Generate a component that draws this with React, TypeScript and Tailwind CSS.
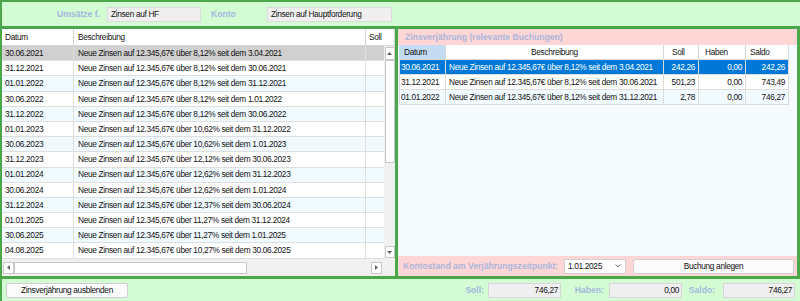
import React from 'react';

const leftRows = [
  ['30.06.2021', 'Neue Zinsen auf 12.345,67€ über 8,12% seit dem 3.04.2021'],
  ['31.12.2021', 'Neue Zinsen auf 12.345,67€ über 8,12% seit dem 30.06.2021'],
  ['01.01.2022', 'Neue Zinsen auf 12.345,67€ über 8,12% seit dem 31.12.2021'],
  ['30.06.2022', 'Neue Zinsen auf 12.345,67€ über 8,12% seit dem 1.01.2022'],
  ['31.12.2022', 'Neue Zinsen auf 12.345,67€ über 8,12% seit dem 30.06.2022'],
  ['01.01.2023', 'Neue Zinsen auf 12.345,67€ über 10,62% seit dem 31.12.2022'],
  ['30.06.2023', 'Neue Zinsen auf 12.345,67€ über 10,62% seit dem 1.01.2023'],
  ['31.12.2023', 'Neue Zinsen auf 12.345,67€ über 12,12% seit dem 30.06.2023'],
  ['01.01.2024', 'Neue Zinsen auf 12.345,67€ über 12,62% seit dem 31.12.2023'],
  ['30.06.2024', 'Neue Zinsen auf 12.345,67€ über 12,62% seit dem 1.01.2024'],
  ['31.12.2024', 'Neue Zinsen auf 12.345,67€ über 12,37% seit dem 30.06.2024'],
  ['01.01.2025', 'Neue Zinsen auf 12.345,67€ über 11,27% seit dem 31.12.2024'],
  ['30.06.2025', 'Neue Zinsen auf 12.345,67€ über 11,27% seit dem 1.01.2025'],
  ['04.08.2025', 'Neue Zinsen auf 12.345,67€ über 10,27% seit dem 30.06.2025'],
];

const rightRows = [
  ['30.06.2021', 'Neue Zinsen auf 12.345,67€ über 8,12% seit dem 3.04.2021', '242,26', '0,00', '242,26'],
  ['31.12.2021', 'Neue Zinsen auf 12.345,67€ über 8,12% seit dem 30.06.2021', '501,23', '0,00', '743,49'],
  ['01.01.2022', 'Neue Zinsen auf 12.345,67€ über 8,12% seit dem 31.12.2021', '2,78', '0,00', '746,27'],
];

const Arrow = ({ dir }: { dir: 'up' | 'down' | 'left' | 'right' }) => {
  const d =
    dir === 'up' ? 'M0 3 L2.5 0 L5 3Z' :
    dir === 'down' ? 'M0 0 L2.5 3 L5 0Z' :
    dir === 'left' ? 'M3 0 L0 2.5 L3 5Z' : 'M0 0 L3 2.5 L0 5Z';
  const vert = dir === 'up' || dir === 'down';
  return (
    <svg width={vert ? 5 : 3} height={vert ? 3 : 5} viewBox={vert ? '0 0 5 3' : '0 0 3 5'}>
      <path d={d} fill="#606060" />
    </svg>
  );
};

const ArrowBox = ({ dir, className }: { dir: 'up' | 'down' | 'left' | 'right'; className: string }) => (
  <div className={`flex items-center justify-center bg-white border border-[#c8c8c8] ${className}`}>
    <Arrow dir={dir} />
  </div>
);

export default function App() {
  return (
    <div className="w-[800px] h-[301px] overflow-hidden flex flex-col bg-[#d4fcd4] border-l-2 border-[#4aa84a] font-['Liberation_Sans',Arial,sans-serif] text-[8.3px] tracking-[-0.33px] text-[#111] leading-none">
      {/* Filter row */}
      <div className="h-[26px] border-t-2 border-[#4aa84a] flex items-center">
        <div className="w-[98px] text-right font-bold text-[8.6px] tracking-normal text-[#a3b6de]">Umsätze f.</div>
        <div className="ml-[7px] w-[94px] h-[15px] flex items-center pl-[3px] bg-[#efefef] border border-[#dcdcdc]">Zinsen auf HF</div>
        <div className="w-[66px] pl-[10px] font-bold text-[8.6px] tracking-normal text-[#a3b6de]">Konto</div>
        <div className="w-[125px] h-[15px] flex items-center pl-[3px] bg-[#efefef] border border-[#dcdcdc]">Zinsen auf Hauptforderung</div>
      </div>

      {/* Main area */}
      <div className="h-[253px] flex border-t-[3px] border-b-[3px] border-r-[3px] border-[#4aa84a]">
        {/* Left grid */}
        <div className="w-[393px] flex flex-col bg-white">
          <div className="h-[17px] flex border-b border-[#d4d4d4] bg-white">
            <div className="w-[72px] pl-[3px] flex items-center border-r border-[#d4d4d4]">Datum</div>
            <div className="w-[292px] pl-[4px] flex items-center border-r border-[#d4d4d4]">Beschreibung</div>
            <div className="w-[29px] pl-[3px] flex items-center border-r border-[#d4d4d4]">Soll</div>
          </div>
          <div className="h-[213px] flex">
            <div className="w-[382px] flex flex-col overflow-hidden">
              {leftRows.map((r, i) => (
                <div
                  key={i}
                  className={`h-[15.2px] shrink-0 flex border-b border-[#dedede] ${
                    i === 0 ? 'bg-[#d0d0d0]' : i % 2 === 0 ? 'bg-[#f0faff]' : 'bg-white'
                  }`}
                >
                  <div className="w-[72px] pl-[3px] flex items-center border-r border-[#dedede]">{r[0]}</div>
                  <div className="w-[292px] pl-[4px] flex items-center border-r border-[#dedede] whitespace-nowrap">{r[1]}</div>
                  <div className="w-[18px]" />
                </div>
              ))}
            </div>
            <div className="w-[11px] bg-[#f0f0f0] flex flex-col items-center">
              <ArrowBox dir="up" className="w-[10px] h-[13px] mt-[1px]" />
              <div className="w-[10px] h-[103px] bg-white border border-[#c8c8c8]" />
              <div className="flex-1" />
              <ArrowBox dir="down" className="w-[10px] h-[12px] mb-[1px]" />
            </div>
          </div>
          <div className="h-[17px] flex items-center bg-[#f0f0f0]">
            <ArrowBox dir="left" className="ml-[1px] w-[11px] h-[12px]" />
            <div className="w-[233px] h-[12px] bg-white border border-[#c8c8c8]" />
            <div className="flex-1" />
            <ArrowBox dir="right" className="w-[11px] h-[12px] mr-[13px]" />
          </div>
        </div>

        {/* Divider */}
        <div className="w-[3px] bg-[#4aa84a]" />

        {/* Right panel */}
        <div className="flex-1 flex flex-col bg-[#ffd6d6]">
          <div className="h-[16px] pl-[7px] flex items-center font-bold text-[8.6px] tracking-normal text-[#a9b6dc]">
            Zinsverjährung (relevante Buchungen)
          </div>
          <div className="h-[211px] bg-[#f5faff] flex flex-col pl-[1px]">
            <div className="w-[390px] h-[15px] flex bg-white border-b border-[#d8d8d8]">
              <div className="w-[47px] pl-[5px] flex items-center bg-[#c4dcf3] border-r border-[#d8d8d8]">Datum</div>
              <div className="w-[218px] flex items-center justify-center border-r border-[#d8d8d8]">Beschreibung</div>
              <div className="w-[35px] pl-[8px] flex items-center border-r border-[#d8d8d8]">Soll</div>
              <div className="w-[47px] pl-[6px] flex items-center border-r border-[#d8d8d8]">Haben</div>
              <div className="w-[43px] pl-[4px] flex items-center border-r border-[#d8d8d8]">Saldo</div>
            </div>
            {rightRows.map((r, i) => (
              <div
                key={i}
                className={`w-[390px] h-[15px] flex border-b border-l border-[#dcdcdc] whitespace-nowrap ${
                  i === 0 ? 'bg-[#0078d7] text-white' : i % 2 === 0 ? 'bg-[#f0faff]' : 'bg-white'
                }`}
              >
                <div className="w-[46px] pl-[1px] flex items-center border-r border-[#dcdcdc]">{r[0]}</div>
                <div className="w-[218px] pl-[3px] flex items-center border-r border-[#dcdcdc] overflow-hidden">{r[1]}</div>
                <div className="w-[35px] pr-[3px] flex items-center justify-end border-r border-[#dcdcdc]">{r[2]}</div>
                <div className="w-[47px] pr-[3px] flex items-center justify-end border-r border-[#dcdcdc]">{r[3]}</div>
                <div className="w-[43px] pr-[3px] flex items-center justify-end border-r border-[#dcdcdc]">{r[4]}</div>
              </div>
            ))}
          </div>
          <div className="h-[20px] flex items-center">
            <div className="w-[166px] pl-[5px] font-bold text-[8.6px] tracking-normal text-[#a9b6dc] whitespace-nowrap">
              Kontostand am Verjährungszeitpunkt:
            </div>
            <div className="w-[62px] h-[15px] flex items-center justify-between pl-[3px] pr-[4px] bg-white border border-[#d0d0d0]">
              <span>1.01.2025</span>
              <svg width="6" height="4" viewBox="0 0 6 4">
                <path d="M0.5 0.5 L3 3 L5.5 0.5" fill="none" stroke="#707070" strokeWidth="0.9" />
              </svg>
            </div>
            <div className="ml-[7px] w-[161px] h-[15px] flex items-center justify-center bg-[#fbfbfb] border border-[#d0d0d0] rounded-[2px]">
              Buchung anlegen
            </div>
          </div>
        </div>
      </div>

      {/* Bottom row */}
      <div className="h-[22px] flex items-center">
        <div className="ml-[4px] w-[122px] h-[15px] flex items-center justify-center bg-[#fbfbfb] border border-[#d0d0d0] rounded-[2px]">
          Zinsverjährung ausblenden
        </div>
        <div className="ml-[312px] w-[48px] pr-[4px] text-right font-bold text-[8.6px] tracking-normal text-[#a3b6de]">Soll:</div>
        <div className="w-[73px] h-[15px] flex items-center justify-end pr-[2px] bg-[#efefef] border border-[#d6d6d6]">746,27</div>
        <div className="w-[48px] pr-[5px] text-right font-bold text-[8.6px] tracking-normal text-[#a3b6de]">Haben:</div>
        <div className="w-[73px] h-[15px] flex items-center justify-end pr-[2px] bg-[#efefef] border border-[#d6d6d6]">0,00</div>
        <div className="w-[41px] pr-[8px] text-right font-bold text-[8.6px] tracking-normal text-[#a3b6de]">Saldo:</div>
        <div className="w-[72px] h-[15px] flex items-center justify-end pr-[2px] bg-[#efefef] border border-[#d6d6d6]">746,27</div>
      </div>
    </div>
  );
}
